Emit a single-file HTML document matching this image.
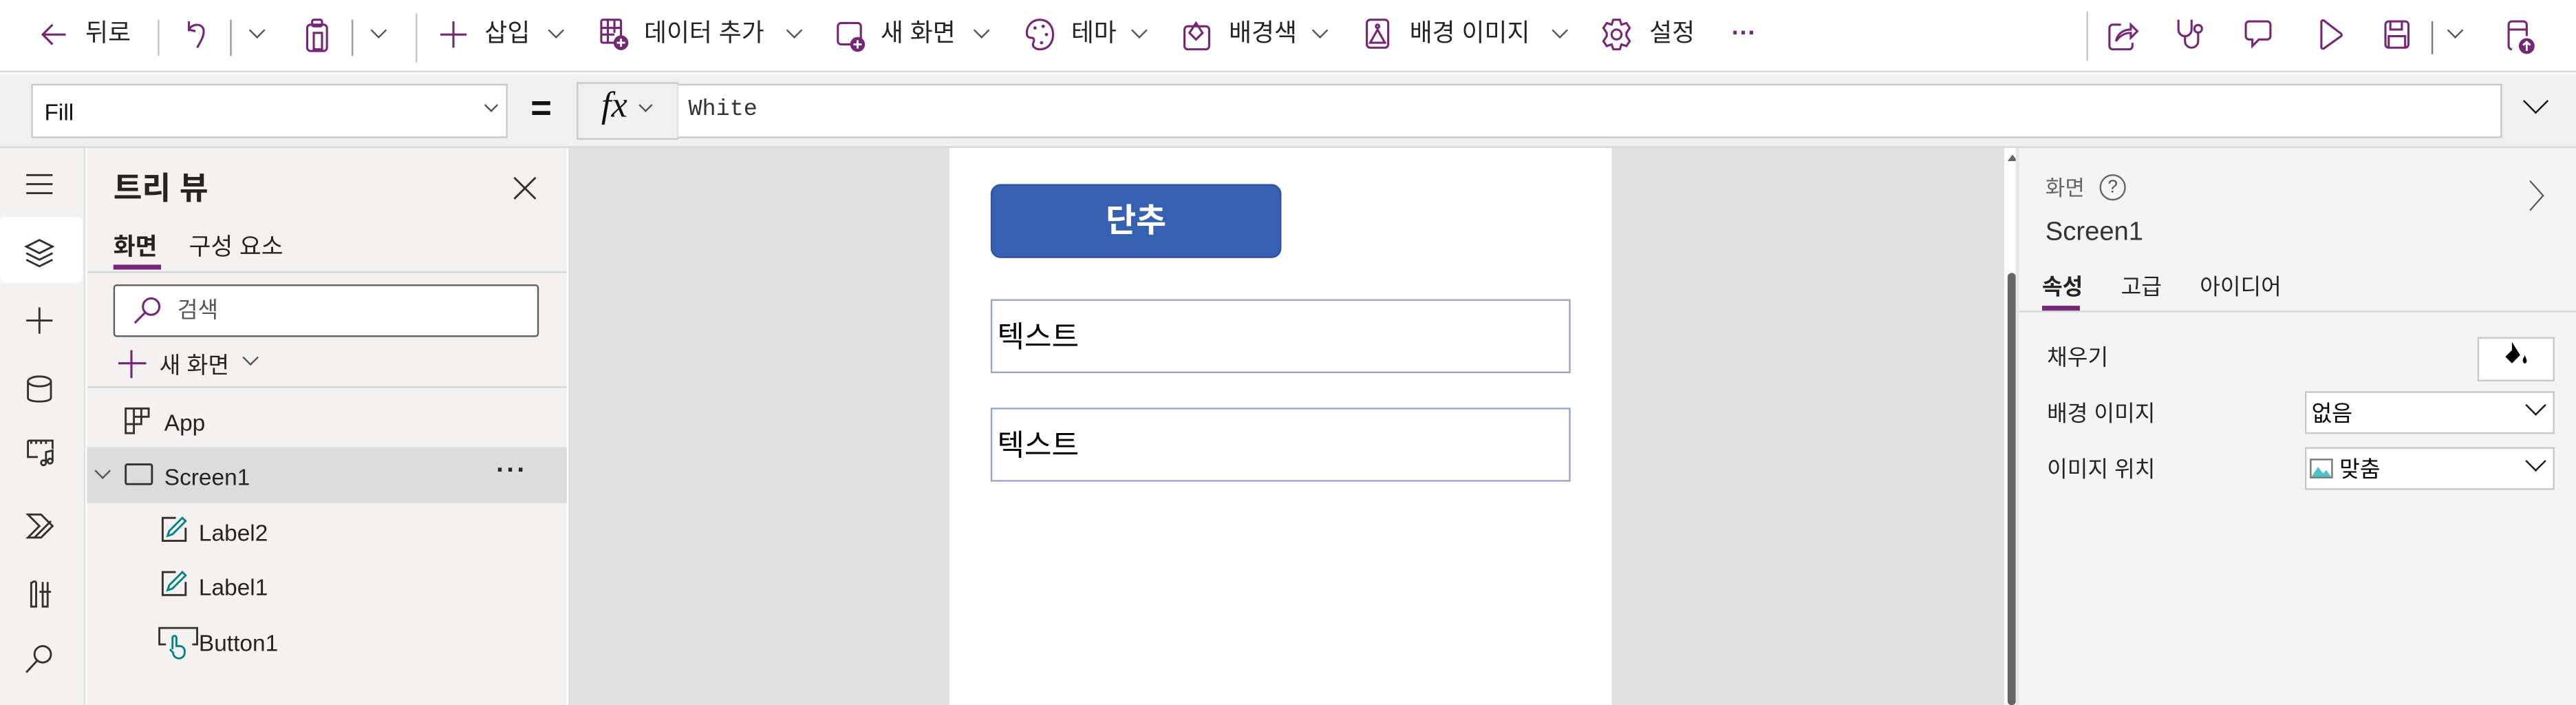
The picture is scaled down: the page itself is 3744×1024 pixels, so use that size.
<!DOCTYPE html>
<html><head><meta charset="utf-8"><style>
*{box-sizing:border-box;margin:0;padding:0}
html,body{width:3744px;height:1023px;overflow:hidden;background:#fff}
#s{position:absolute;left:0;top:0;width:1568px;height:429px;transform:scale(2.38776);transform-origin:0 0;font-family:"Segoe UI","Liberation Sans","Noto Sans CJK KR",sans-serif;color:#252423}
.a{position:absolute}
.t{position:absolute;white-space:nowrap;font-size:15px;line-height:20px}
svg{position:absolute;overflow:visible}
.p{stroke:#742774;fill:none;stroke-width:1.3}
.g{stroke:#323130;fill:none;stroke-width:1.2}
.chev{position:absolute;width:7px;height:7px;border-right:1px solid #555;border-bottom:1px solid #555;transform:rotate(45deg)}
.sep{position:absolute;width:1px;background:#c8c6c4}
.tb{top:11px}
</style></head><body><div id="s">
<!-- toolbar -->
<div class="a" style="left:0;top:0;width:1568px;height:44px;background:#fff;border-bottom:1px solid #d6d6d6"></div>
<svg style="left:25px;top:13px" width="16" height="16"><path class="p" d="M15 8H1M7 2L1 8l6 6"/></svg>
<div class="t tb" style="left:52px">뒤로</div>
<div class="sep" style="left:96px;top:12px;height:22px"></div>
<svg style="left:112px;top:11px" width="16" height="20"><path class="p" d="M3 2v6h0M3 7c2-4 9-4 9 1 0 4-3 8-4 10M3 7l4 1"/></svg>
<div class="sep" style="left:140px;top:12px;height:22px;background:#999"></div>
<div class="chev" style="left:153px;top:15px"></div>
<svg style="left:186px;top:11px" width="18" height="22"><rect class="p" x="1" y="4" width="12" height="16" rx="2"/><rect class="p" x="4" y="1" width="6" height="4" rx="1"/><rect class="p" x="5" y="9" width="5" height="10"/></svg>
<div class="sep" style="left:214px;top:12px;height:22px;background:#999"></div>
<div class="chev" style="left:227px;top:15px"></div>
<div class="sep" style="left:253px;top:8px;height:30px"></div>
<svg style="left:268px;top:13px" width="16" height="16"><path class="p" d="M8 0v16M0 8h16"/></svg>
<div class="t tb" style="left:295px">삽입</div><div class="chev" style="left:335px;top:15px"></div>
<svg style="left:365px;top:11px" width="18" height="20"><rect class="p" x="1" y="1" width="12" height="14" rx="1"/><path class="p" d="M1 6h12M1 10h8M5 1v14M9 1v8"/><circle cx="13" cy="15" r="4.5" fill="#742774"/><path d="M13 12.5v5M10.5 15h5" stroke="#fff" stroke-width="1.2"/></svg>
<div class="t tb" style="left:392px">데이터 추가</div><div class="chev" style="left:480px;top:15px"></div>
<svg style="left:509px;top:12px" width="18" height="20"><rect class="p" x="1" y="2" width="14" height="13" rx="2"/><circle cx="13" cy="15" r="4.5" fill="#742774"/><path d="M13 12.5v5M10.5 15h5" stroke="#fff" stroke-width="1.2"/></svg>
<div class="t tb" style="left:536px">새 화면</div><div class="chev" style="left:594px;top:15px"></div>
<svg style="left:624px;top:11px" width="18" height="20"><path class="p" d="M9 1C4 1 1 5 1 9c0 3 2 3 3 3s2 1 1 3 1 4 4 4c5 0 8-4 8-9S14 1 9 1z"/><circle cx="6" cy="6" r="1" fill="#742774"/><circle cx="11" cy="5" r="1" fill="#742774"/><circle cx="13" cy="10" r="1" fill="#742774"/><circle cx="10" cy="15" r="1" fill="#742774"/></svg>
<div class="t tb" style="left:652px">테마</div><div class="chev" style="left:690px;top:15px"></div>
<svg style="left:720px;top:10px" width="18" height="22"><rect class="p" x="1" y="6" width="15" height="14" rx="2"/><path class="p" d="M4 10l4-6 4 6-4 4z"/></svg>
<div class="t tb" style="left:748px">배경색</div><div class="chev" style="left:800px;top:15px"></div>
<svg style="left:831px;top:11px" width="16" height="20"><rect class="p" x="1" y="1" width="13" height="17" rx="2"/><path class="p" d="M3 15l4.5-8L12 15z"/><circle cx="7.5" cy="5" r="1" class="p"/></svg>
<div class="t tb" style="left:858px">배경 이미지</div><div class="chev" style="left:946px;top:15px"></div>
<svg style="left:976px;top:11px" width="18" height="20"><circle cx="8" cy="10" r="3" class="p"/><path class="p" d="M6 1h4l1 3 3-1 2 3-2 3v2l2 3-2 3-3-1-1 3H6l-1-3-3 1-2-3 2-3V9L0 6l2-3 3 1z"/></svg>
<div class="t tb" style="left:1004px">설정</div>
<div class="t" style="left:1054px;top:11px;color:#742774;font-weight:bold">···</div>
<div class="sep" style="left:1270px;top:7px;height:30px"></div>
<svg style="left:1283px;top:12px" width="18" height="20"><path class="p" d="M8 3H3a2 2 0 00-2 2v11a2 2 0 002 2h10a2 2 0 002-2v-2"/><path class="p" d="M5 13c1-5 5-7 9-7V3l4 4-4 4V8c-3 0-6 1-9 5z"/></svg>
<svg style="left:1324px;top:11px" width="20" height="22"><path class="p" d="M2 1v6a4 4 0 008 0V1M6 11v3a4 4 0 008 0V9"/><circle class="p" cx="14" cy="6.5" r="2.3"/></svg>
<svg style="left:1366px;top:12px" width="20" height="22"><path class="p" d="M3 1h11a2 2 0 012 2v7a2 2 0 01-2 2H9l-4 4v-4H3a2 2 0 01-2-2V3a2 2 0 012-2z"/></svg>
<svg style="left:1411px;top:12px" width="16" height="20"><path class="p" d="M2 1.5v15a1 1 0 001.5 1L14 10a1 1 0 000-1.5L3.5.5A1 1 0 002 1.5z"/></svg>
<svg style="left:1451px;top:12px" width="18" height="20"><rect class="p" x="1" y="1" width="14" height="16" rx="2"/><path class="p" d="M4 1v5h7V1M3 17v-7h10v7"/></svg>
<div class="sep" style="left:1480px;top:13px;height:20px;background:#777"></div>
<div class="chev" style="left:1491px;top:15px"></div>
<svg style="left:1526px;top:12px" width="20" height="22"><path class="p" d="M3 18a2 2 0 01-2-2V3a2 2 0 012-2h7a2 2 0 012 2v7M1 6h11"/><circle cx="12" cy="16" r="4.8" fill="#742774"/><path d="M12 19v-5.5M9.8 15.5L12 13.5l2.2 2" stroke="#fff" fill="none" stroke-width="1.2"/></svg>
<!-- formula bar -->
<div class="a" style="left:0;top:45px;width:1568px;height:45px;background:#f0f0f0;border-bottom:1px solid #d6d6d6"></div>
<div class="a" style="left:19px;top:51px;width:290px;height:33px;background:#fff;border:1px solid #c8c8c8"></div>
<div class="t" style="left:27px;top:58px;font-size:14px;color:#111">Fill</div>
<div class="chev" style="left:296px;top:61px;width:6px;height:6px"></div>
<div class="t" style="left:323px;top:56px;font-size:22px;font-weight:bold;color:#111">=</div>
<div class="a" style="left:351px;top:50px;width:62px;height:35px;background:#f0f0f0;border:1px solid #c8c8c8"></div>
<div class="t" style="left:366px;top:54px;font-size:22px;font-family:'Liberation Serif',serif;font-style:italic;color:#111">fx</div>
<div class="chev" style="left:390px;top:61px;width:6px;height:6px"></div>
<div class="a" style="left:412px;top:51px;width:1111px;height:33px;background:#fff;border:1px solid #c8c8c8;border-left:1px solid #e0e0e0"></div>
<div class="t" style="left:419px;top:57px;font-family:'Liberation Mono',monospace;font-size:14px;color:#333">White</div>
<div class="chev" style="left:1538px;top:56px;width:11px;height:11px;border-color:#111"></div>
<!-- left rail -->
<div class="a" style="left:0;top:90px;width:52px;height:339px;background:#f3f2f1;border-right:1px solid #e1dfdd"></div>
<div class="a" style="left:0;top:132px;width:50px;height:40px;background:#fff;border-radius:3px"></div>
<svg style="left:16px;top:106px" width="20" height="300">
<path class="g" d="M0 0.5h16M0 6h16M0 11.5h16"/>
<path class="g" d="M8 40l8 4-8 4-8-4zM0 48l8 4 8-4M0 52l8 4 8-4"/>
<path class="g" d="M8 81v16M0 89h16"/>
<ellipse class="g" cx="8" cy="126" rx="7" ry="3"/><path class="g" d="M1 126v10c0 3 14 3 14 0v-10"/>
<path class="g" d="M1 162h15v5M1 162v10h6M3 162v2M6 162v2M9 162v2M12 162v2M12 175v-6l4-1v6"/><circle class="g" cx="10.5" cy="175.5" r="1.5"/><circle class="g" cx="14.5" cy="174.5" r="1.5"/>
<path class="g" d="M1 207h8l7 7-7 7H1l7-7zM5 221l10-10"/>
<path class="g" d="M3 248v15h3v-15M3 250a2 2 0 013-2M10 248v15h3v-15M8 254h7"/>
<circle class="g" cx="10" cy="292" r="5"/><path class="g" d="M6.5 296L0 303"/>
</svg>
<!-- tree panel -->
<div class="a" style="left:53px;top:90px;width:292px;height:339px;background:#f3f2f1"></div>
<div class="t" style="left:69px;top:103px;font-size:19px;font-weight:bold;line-height:26px">트리 뷰</div>
<svg style="left:313px;top:108px" width="14" height="14"><path class="g" d="M0 0l13 13M13 0L0 13"/></svg>
<div class="t" style="left:69px;top:141px;font-size:14.5px;font-weight:bold">화면</div>
<div class="a" style="left:69px;top:161px;width:29px;height:3px;background:#742774"></div>
<div class="t" style="left:115px;top:141px;font-size:14.5px">구성 요소</div>
<div class="a" style="left:53px;top:165px;width:292px;height:1px;background:#d6d6d6"></div>
<div class="a" style="left:69px;top:173px;width:259px;height:32px;background:#fff;border:1px solid #605e5c;border-radius:2px"></div>
<svg style="left:81px;top:180px" width="20" height="20"><circle class="p" cx="11" cy="6.5" r="5"/><path class="p" d="M7.5 10L1 16.5"/></svg>
<div class="t" style="left:108px;top:179px;font-size:13.5px;color:#555">검색</div>
<svg style="left:72px;top:212px" width="20" height="20"><path class="p" d="M8 1v17M0 9h17"/></svg>
<div class="t" style="left:97px;top:212px;font-size:14px">새 화면</div>
<div class="chev" style="left:149px;top:214px;width:7px;height:7px"></div>
<div class="a" style="left:53px;top:235px;width:292px;height:1px;background:#d6d6d6"></div>
<svg style="left:76px;top:248px" width="16" height="16"><path class="g" d="M0.5 0.5h9.5v9.5H0.5zM0.5 10v5.5h5v-15M5 5.5h9.5v-5H5"/></svg>
<div class="t" style="left:100px;top:247px;font-size:14px">App</div>
<div class="a" style="left:53px;top:272px;width:292px;height:34px;background:#dcdcdc"></div>
<div class="chev" style="left:59px;top:283px;width:7px;height:7px"></div>
<svg style="left:76px;top:282px" width="18" height="14"><rect class="g" x="0.5" y="0.5" width="16" height="12" rx="1"/></svg>
<div class="t" style="left:100px;top:280px;font-size:14px">Screen1</div>
<div class="t" style="left:302px;top:277px;font-size:16px;letter-spacing:1px;font-weight:bold">···</div>
<svg style="left:98px;top:314px" width="20" height="20"><path class="g" d="M9 1H1v14h14V7"/><path d="M4 12l1-3 8-8 2 2-8 8z" stroke="#038387" fill="none" stroke-width="1.2"/></svg>
<div class="t" style="left:121px;top:314px;font-size:14px">Label2</div>
<svg style="left:98px;top:347px" width="20" height="20"><path class="g" d="M9 1H1v14h14V7"/><path d="M4 12l1-3 8-8 2 2-8 8z" stroke="#038387" fill="none" stroke-width="1.2"/></svg>
<div class="t" style="left:121px;top:347px;font-size:14px">Label1</div>
<svg style="left:96px;top:381px" width="22" height="20"><path class="g" d="M5 11H1V1h23v10h-3"/><path d="M9 14V7a1.2 1.2 0 012.4 0v5h2a3 3 0 013 3v1a3.5 3.5 0 01-7 0l-2-2" stroke="#038387" fill="none" stroke-width="1.2"/></svg>
<div class="t" style="left:121px;top:381px;font-size:14px">Button1</div>
<!-- canvas -->
<div class="a" style="left:346px;top:90px;width:874px;height:339px;background:#e0e0e0"></div>
<div class="a" style="left:578px;top:90px;width:403px;height:339px;background:#fff"></div>
<div class="a" style="left:603px;top:112px;width:177px;height:45px;background:#3860b0;border:1px solid #3355a0;border-radius:6px"></div>
<div class="t" style="left:603px;top:122px;width:177px;text-align:center;color:#fff;font-size:20px;font-weight:bold;line-height:26px">단추</div>
<div class="a" style="left:603px;top:182px;width:353px;height:45px;border:1px solid #9aa4c8"></div>
<div class="t" style="left:607px;top:193px;font-size:18px;color:#000;line-height:24px">텍스트</div>
<div class="a" style="left:603px;top:248px;width:353px;height:45px;border:1px solid #9aa4c8"></div>
<div class="t" style="left:607px;top:259px;font-size:18px;color:#000;line-height:24px">텍스트</div>
<!-- scrollbar -->
<div class="a" style="left:1220px;top:90px;width:7px;height:339px;background:#fff"></div>
<div class="a" style="left:1222px;top:94px;width:0;height:0;border-left:3px solid transparent;border-right:3px solid transparent;border-bottom:4px solid #666"></div>
<div class="a" style="left:1222px;top:166px;width:5px;height:263px;background:#666;border-radius:3px"></div>
<!-- right panel -->
<div class="a" style="left:1227px;top:90px;width:341px;height:339px;background:#f4f4f4;border-left:2px solid #e6e6e6"></div>
<div class="t" style="left:1245px;top:105px;font-size:13px;color:#666">화면</div>
<div class="a" style="left:1278px;top:106px;width:16px;height:16px;border:1px solid #666;border-radius:50%;font-size:11px;line-height:14px;text-align:center;color:#555">?</div>
<svg style="left:1540px;top:110px" width="10" height="20"><path d="M0 0l8 9-8 9" stroke="#555" fill="none" stroke-width="0.9"/></svg>
<div class="t" style="left:1245px;top:132px;font-size:16px;color:#333">Screen1</div>
<div class="t" style="left:1243px;top:165px;font-size:13.5px;font-weight:bold">속성</div>
<div class="t" style="left:1291px;top:165px;font-size:13.5px">고급</div>
<div class="t" style="left:1339px;top:165px;font-size:13.5px">아이디어</div>
<div class="a" style="left:1243px;top:186px;width:23px;height:3px;background:#742774"></div>
<div class="a" style="left:1229px;top:189px;width:339px;height:1px;background:#d6d6d6"></div>
<div class="t" style="left:1246px;top:208px;font-size:13.5px">채우기</div>
<div class="a" style="left:1508px;top:205px;width:47px;height:27px;background:#fff;border:1px solid #c8c8c8"></div>
<svg style="left:1524px;top:208px" width="16" height="16"><path d="M5 0v5L1 9l4 4 5-5z" fill="#000"/><path d="M13 8c-1 2-2 3-1 4.5s2 0 2-1-1-2.5-1-3.5z" fill="#000"/></svg>
<div class="t" style="left:1246px;top:242px;font-size:13.5px">배경 이미지</div>
<div class="a" style="left:1403px;top:238px;width:152px;height:26px;background:#fff;border:1px solid #c8c8c8"></div>
<div class="t" style="left:1407px;top:242px;font-size:13.5px;color:#000">없음</div>
<div class="chev" style="left:1539px;top:242px;width:9px;height:9px;border-color:#111"></div>
<div class="t" style="left:1246px;top:276px;font-size:13.5px">이미지 위치</div>
<div class="a" style="left:1403px;top:272px;width:152px;height:26px;background:#fff;border:1px solid #c8c8c8"></div>
<svg style="left:1406px;top:279px" width="14" height="12"><rect x="0.5" y="0.5" width="13" height="11" fill="#fff" stroke="#777"/><path d="M1 11l4-6 3 4 2-2 3 4z" fill="#4fc3c3"/></svg>
<div class="t" style="left:1424px;top:276px;font-size:13.5px;color:#000">맞춤</div>
<div class="chev" style="left:1539px;top:276px;width:9px;height:9px;border-color:#111"></div>
</div></body></html>
